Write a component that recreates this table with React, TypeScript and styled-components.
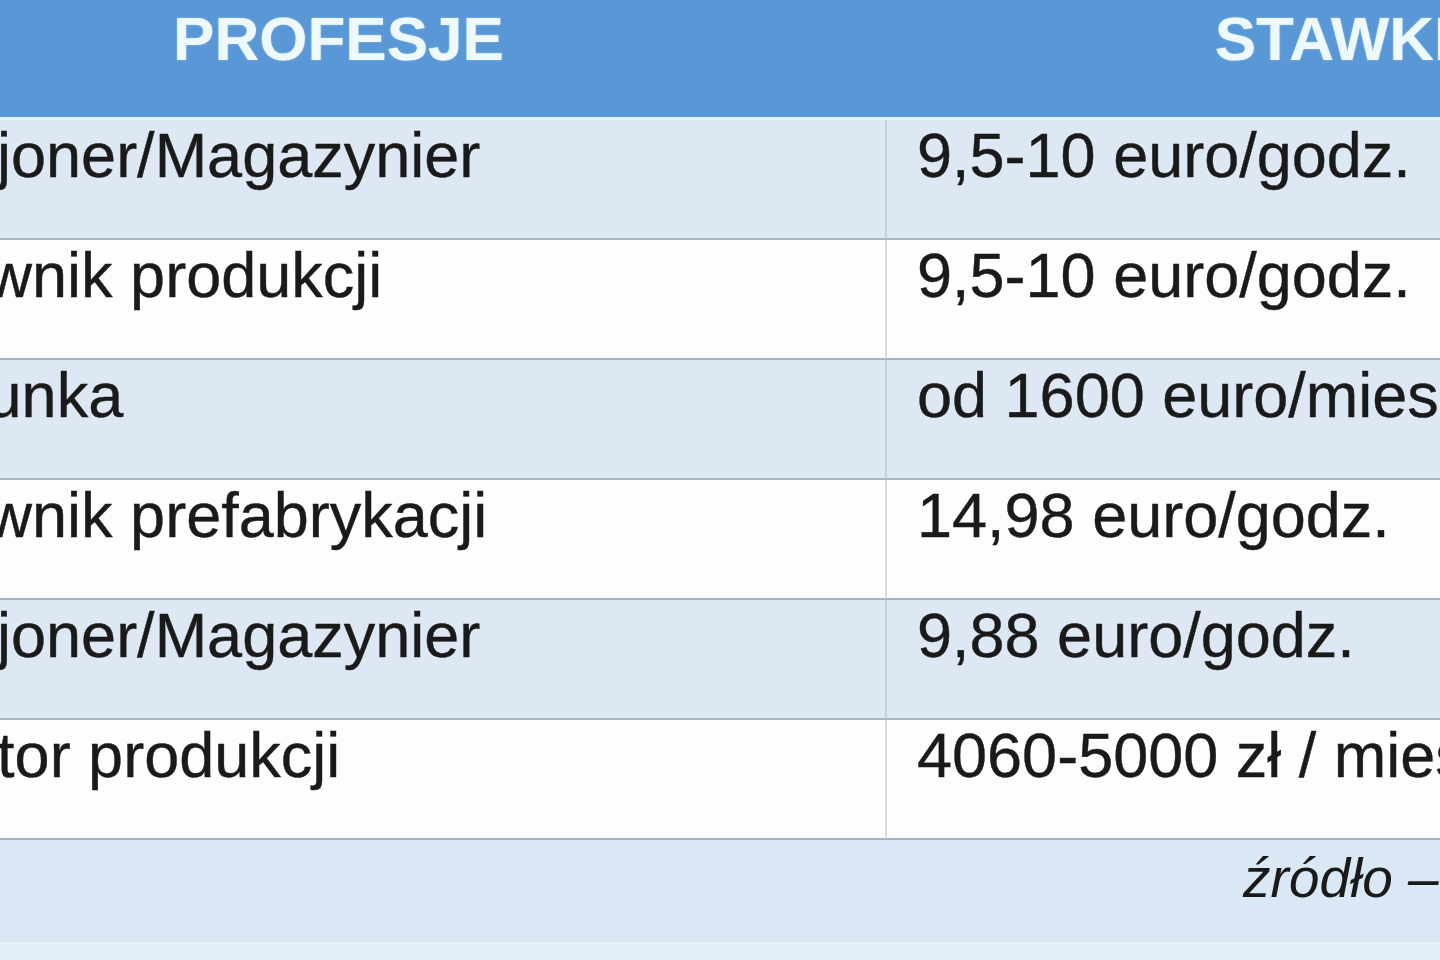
import React from "react";
import styled, { createGlobalStyle } from "styled-components";

const Global = createGlobalStyle`
  html, body {
    margin: 0;
    padding: 0;
    width: 1440px;
    height: 960px;
    overflow: hidden;
    background: #e4eef8;
    font-family: "Liberation Sans", Arial, sans-serif;
  }
  * { box-sizing: border-box; }
`;

const Page = styled.div`
  width: 1440px;
  height: 960px;
  overflow: hidden;
`;

const Table = styled.div`
  margin-left: -208px;
  width: 1989px;
  display: flex;
  flex-direction: column;
`;

const HeaderRow = styled.div`
  display: grid;
  grid-template-columns: 1093px 896px;
  height: 120px;
  background: #5a97d6;
  border-bottom: 3px solid #e4f3fc;
`;

const HeadCell = styled.div`
  display: flex;
  justify-content: center;
  align-items: flex-start;
  padding-top: 8px;
  font-weight: 700;
  font-size: 62px;
  line-height: 1;
  color: #eef9fd;
  text-shadow: 0 0 2px rgba(200, 235, 250, 0.6);
  white-space: nowrap;
`;

const Row = styled.div<{ $shade: boolean }>`
  display: grid;
  grid-template-columns: 1093px 896px;
  height: 120px;
  background: ${(p) => (p.$shade ? "#dde8f4" : "#fdfdfd")};
  border-bottom: 2px solid #a9b5c0;
`;

const Cell = styled.div<{ $divider?: boolean; $shade?: boolean }>`
  padding: 4px 0 0 30px;
  font-size: 63px;
  line-height: 1;
  color: #1a1a1a;
  white-space: nowrap;
  overflow: hidden;
  -webkit-text-stroke: 0.4px #1a1a1a;
  border-left: ${(p) =>
    p.$divider ? `2px solid ${p.$shade ? "#c4d3e2" : "#d3dce6"}` : "none"};
`;

const Footer = styled.div`
  height: 104px;
  background: #dae7f4;
  display: flex;
  align-items: flex-start;
  padding: 11px 0 0 1451px;
  border-bottom: 2px solid #eaf3fb;
`;

const Source = styled.span`
  font-style: italic;
  font-size: 55px;
  line-height: 1;
  color: #1a1a1a;
  white-space: nowrap;
`;

const rows: [string, string][] = [
  ["Komisjoner/Magazynier", "9,5-10 euro/godz."],
  ["Pracownik produkcji", "9,5-10 euro/godz."],
  ["Opiekunka", "od 1600 euro/miesiąc"],
  ["Pracownik prefabrykacji", "14,98 euro/godz."],
  ["Komisjoner/Magazynier", "9,88 euro/godz."],
  ["Operator produkcji", "4060-5000 zł / miesiąc"],
];

export default function App() {
  return (
    <Page>
      <Global />
      <Table>
        <HeaderRow>
          <HeadCell>PROFESJE</HeadCell>
          <HeadCell>STAWKI</HeadCell>
        </HeaderRow>
        {rows.map(([job, rate], i) => (
          <Row key={i} $shade={i % 2 === 0}>
            <Cell>{job}</Cell>
            <Cell $divider $shade={i % 2 === 0}>
              {rate}
            </Cell>
          </Row>
        ))}
        <Footer>
          <Source>źródło – opracowanie własne</Source>
        </Footer>
      </Table>
    </Page>
  );
}
